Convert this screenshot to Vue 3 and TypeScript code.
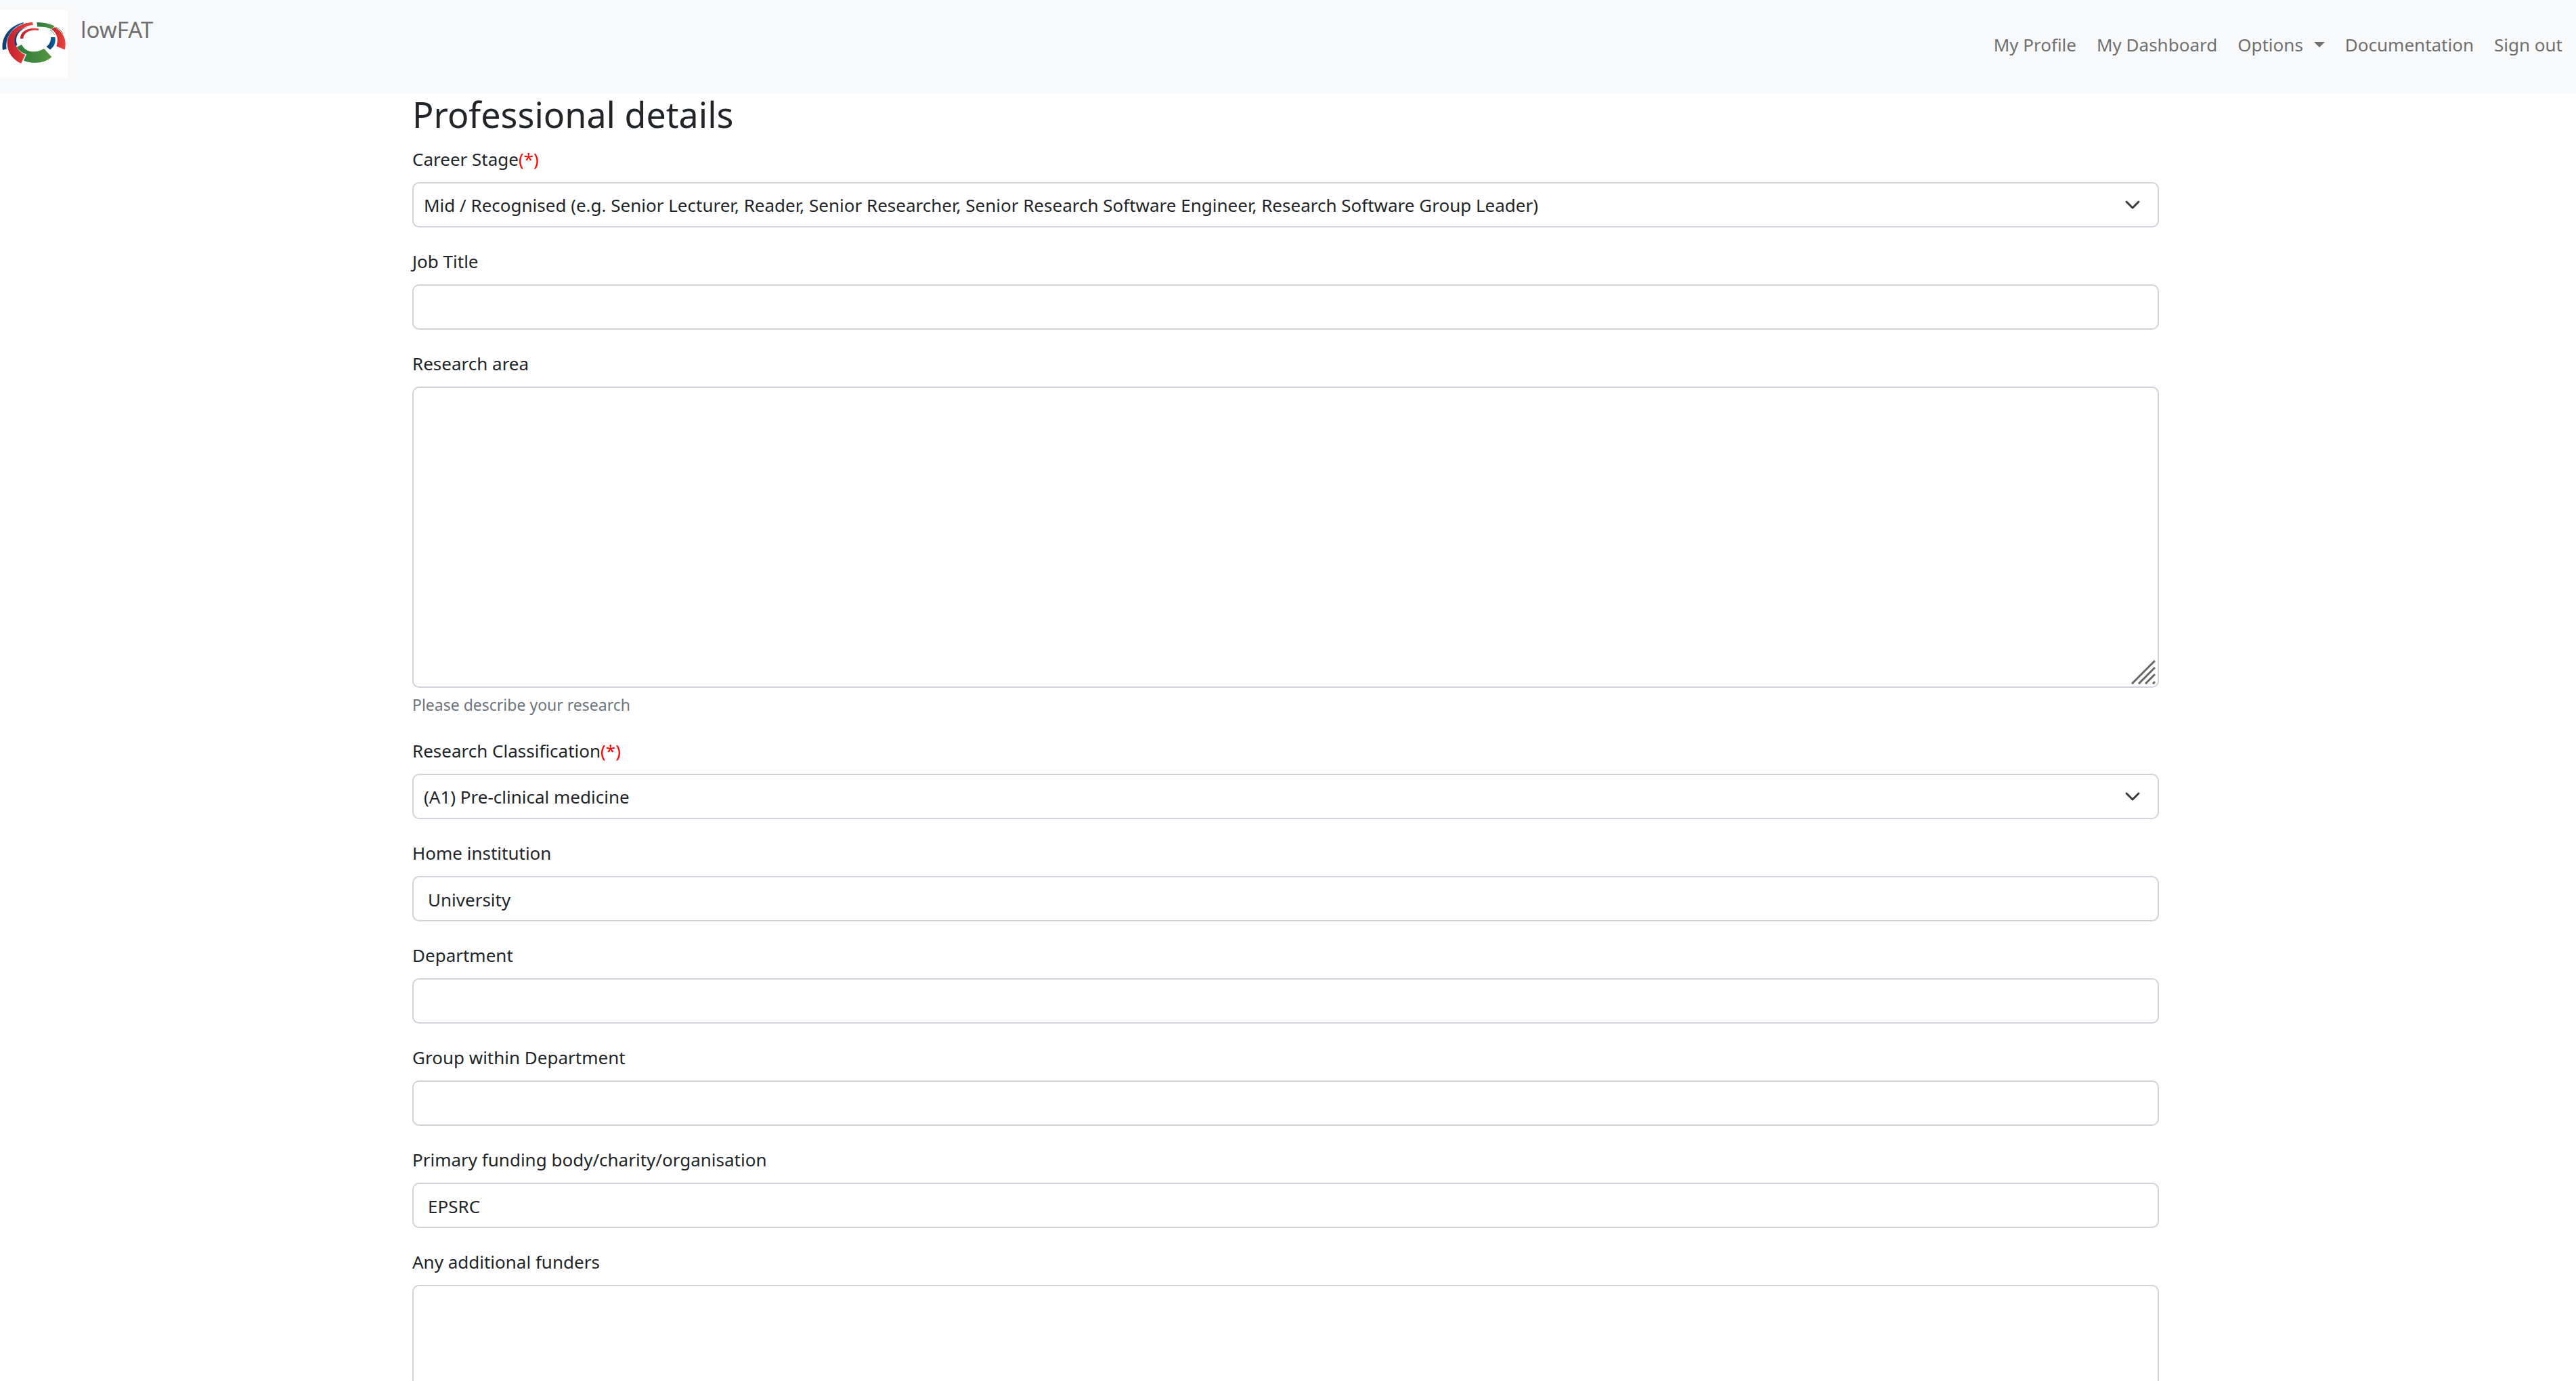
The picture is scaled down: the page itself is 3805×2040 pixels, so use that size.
<script setup lang="ts">
import { reactive } from 'vue'

type FieldKind = 'select' | 'text' | 'area'

interface Field {
  id: string
  label: string
  kind: FieldKind
  required?: boolean
  help?: string
  options?: string[]
}

const fields: Field[] = [
  {
    id: 'career_stage',
    label: 'Career Stage',
    kind: 'select',
    required: true,
    options: [
      'Mid / Recognised (e.g. Senior Lecturer, Reader, Senior Researcher, Senior Research Software Engineer, Research Software Group Leader)',
    ],
  },
  { id: 'job_title', label: 'Job Title', kind: 'text' },
  { id: 'research_area', label: 'Research area', kind: 'area', help: 'Please describe your research' },
  {
    id: 'research_classification',
    label: 'Research Classification',
    kind: 'select',
    required: true,
    options: ['(A1) Pre-clinical medicine'],
  },
  { id: 'home_institution', label: 'Home institution', kind: 'text' },
  { id: 'department', label: 'Department', kind: 'text' },
  { id: 'group', label: 'Group within Department', kind: 'text' },
  { id: 'funding', label: 'Primary funding body/charity/organisation', kind: 'text' },
  { id: 'additional_funders', label: 'Any additional funders', kind: 'area' },
]

const values = reactive<Record<string, string>>({
  career_stage: fields[0].options![0],
  job_title: '',
  research_area: '',
  research_classification: '(A1) Pre-clinical medicine',
  home_institution: 'University',
  department: '',
  group: '',
  funding: 'EPSRC',
  additional_funders: '',
})
</script>

<template>
  <header class="navbar">
    <a class="brand" href="#">
      <svg class="logo" viewBox="0 0 300 300" aria-hidden="true">
        <defs>
          <linearGradient id="red" x1="0" x2="1"><stop offset="0" stop-color="#c1202f" /><stop offset="1" stop-color="#ee463c" /></linearGradient>
          <linearGradient id="green" x1="0" x2="1"><stop offset="0" stop-color="#2c7a3c" /><stop offset="1" stop-color="#55953f" /></linearGradient>
          <linearGradient id="blue" x1="0" x2="1"><stop offset="0" stop-color="#0b3c6f" /><stop offset="1" stop-color="#0a64a8" /></linearGradient>
        </defs>
        <rect width="300" height="300" fill="#fff" />
        <path fill="url(#blue)" d="M12 177C3 120 42 68 105 54L104 59C53 75 22 122 29 172Z" />
        <path fill="url(#red)" d="M144 53C78 58 32 98 32 147C32 186 55 218 93 236L112 198C87 187 68 166 68 139C68 99 103 70 147 65Z" />
        <path fill="url(#blue)" d="M120 75C78 86 55 118 69 158L77 155C63 122 82 89 120 76Z" />
        <path fill="url(#red)" d="M90 126C88 95 124 73 172 82L170 90C135 83 104 100 103 126Z" />
        <path fill="url(#green)" d="M163 54C193 53 220 60 243 71L228 84C210 76 190 73 166 74Z" />
        <path fill="none" stroke="#3f8a3f" stroke-width="3" d="M247 75C261 83 273 94 280 106M222 87C231 93 238 101 242 108" />
        <path fill="url(#red)" d="M243 76C282 98 298 135 287 175L250 160C260 129 254 103 228 84Z" />
        <path fill="url(#blue)" d="M225 120L244 120C249 143 240 162 222 175L206 162C220 151 226 137 225 120Z" />
        <path fill="url(#green)" d="M74 164L96 152C112 188 160 193 195 170L229 208C197 236 149 240 105 224L117 196C98 190 83 179 74 164Z" />
      </svg>
      <span class="brand-name">lowFAT</span>
    </a>
    <nav class="links">
      <a href="#">My Profile</a>
      <a href="#">My Dashboard</a>
      <a href="#" class="dropdown">Options<svg class="caret" viewBox="0 0 16 8" aria-hidden="true"><path d="M0 0H16L8 8Z" fill="currentColor" /></svg></a>
      <a href="#">Documentation</a>
      <a href="#">Sign out</a>
    </nav>
  </header>

  <main class="content">
    <h2>Professional details</h2>
    <form @submit.prevent>
      <div v-for="f in fields" :key="f.id" class="field">
        <label :for="f.id">{{ f.label }}<span v-if="f.required" class="required">(*)</span></label>
        <div class="control">
          <template v-if="f.kind === 'select'">
            <select :id="f.id" v-model="values[f.id]">
              <option v-for="o in f.options" :key="o" :value="o">{{ o }}</option>
            </select>
            <svg class="chevron" viewBox="0 0 24 16" aria-hidden="true">
              <path d="M3 4L12 13L21 4" fill="none" stroke="#343a40" stroke-width="3" stroke-linecap="round" stroke-linejoin="round" />
            </svg>
          </template>
          <input v-else-if="f.kind === 'text'" :id="f.id" v-model="values[f.id]" type="text" />
          <template v-else>
            <textarea :id="f.id" v-model="values[f.id]"></textarea>
            <svg class="grip" viewBox="0 0 36 36" aria-hidden="true">
              <path d="M1 35L35 1M11 35L35 11M21 35L35 21M32 35L35 32" fill="none" stroke="#666" stroke-width="3" />
            </svg>
          </template>
        </div>
        <small v-if="f.help">{{ f.help }}</small>
      </div>
    </form>
  </main>
</template>

<style>
html {
  scrollbar-width: none;
}

body {
  margin: 0;
  background: #fff;
}
</style>

<style scoped>
.navbar,
.content {
  font-family: 'Segoe UI', 'Noto Sans', 'Open Sans', sans-serif;
  font-size: 26px;
  line-height: 44px;
  color: #212529;
}

.navbar {
  display: flex;
  justify-content: space-between;
  align-items: flex-start;
  box-sizing: border-box;
  min-height: 138px;
  padding: 15px 20px 15px 0;
  background: #f8f9fb;
}

.navbar a {
  color: #707070;
  text-decoration: none;
}

.brand {
  display: flex;
  gap: 19px;
}

.logo {
  width: 100px;
  height: 100px;
}

.brand-name {
  font-size: 33px;
  line-height: 58px;
}

.links {
  display: flex;
  gap: 30px;
  padding-top: 29px;
}

.dropdown {
  display: flex;
  align-items: center;
}

.caret {
  width: 16px;
  height: 8px;
  margin-left: 16px;
}

.content {
  padding: 0 616px 0 609px;
}

h2 {
  margin: 0 0 14px;
  font-size: 52px;
  line-height: 61px;
  font-weight: 400;
}

.field {
  display: flex;
  flex-direction: column;
  margin-bottom: 28px;
}

label {
  margin-bottom: 12px;
}

.required {
  color: #f00;
}

.control {
  position: relative;
  display: flex;
}

input,
select,
textarea {
  box-sizing: border-box;
  width: 100%;
  height: 67px;
  margin: 0;
  padding: 12px 21px 10px;
  border: 2px solid #ced4da;
  border-radius: 10px;
  outline: 0;
  background: #fff;
  color: inherit;
  font: inherit;
  line-height: 41px;
}

select {
  appearance: none;
  padding-left: 15px;
}

textarea {
  height: 445px;
  resize: none;
}

.chevron {
  position: absolute;
  right: 27px;
  top: 25px;
  width: 24px;
  height: 16px;
  pointer-events: none;
}

.grip {
  position: absolute;
  right: 5px;
  bottom: 5px;
  width: 36px;
  height: 36px;
  pointer-events: none;
}

small {
  margin-top: 7px;
  font-size: 23px;
  line-height: 36px;
  color: #6c757d;
}
</style>
